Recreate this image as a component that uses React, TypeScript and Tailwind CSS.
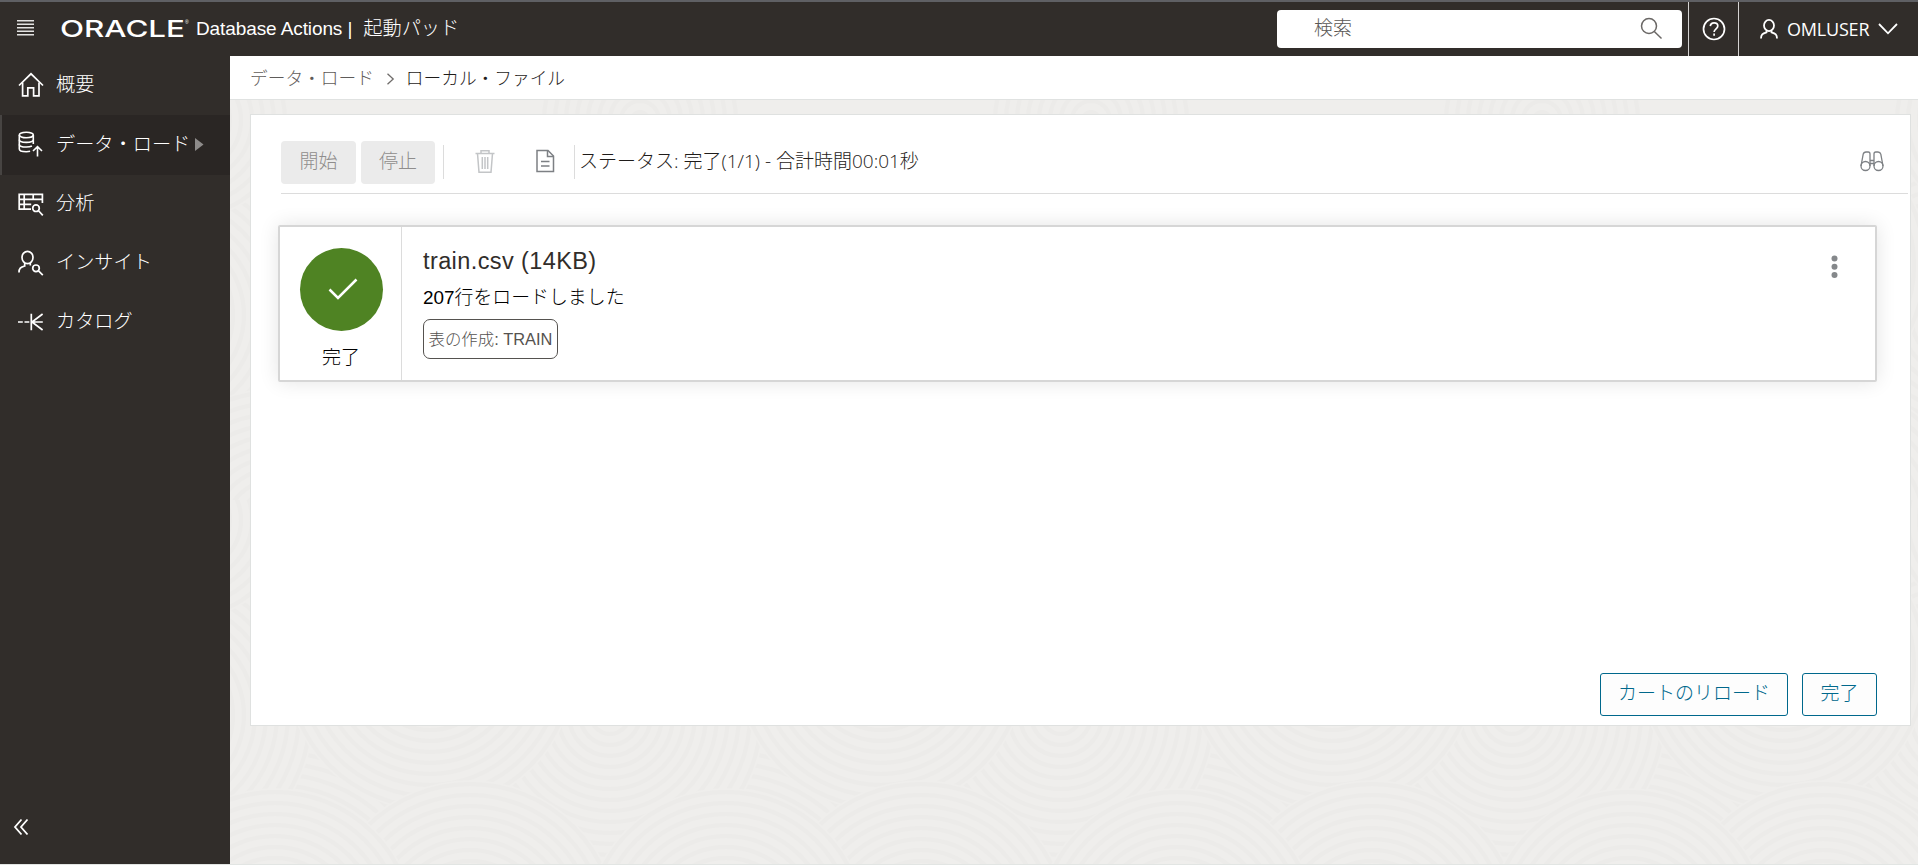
import type { ReactNode } from "react";

type NavItem = {
  label: string;
  icon: ReactNode;
  active?: boolean;
};

function HomeIcon() {
  return (
    <svg width="26" height="26" viewBox="0 0 26 26" fill="none" stroke="#fff" strokeWidth="1.7">
      <path d="M1 13.5 13 1.8l12 11.7" />
      <path d="M4.6 10.5v13.3h5.2v-8h5.8v8H21V10.5" />
    </svg>
  );
}

function DataLoadIcon() {
  return (
    <svg width="26" height="26" viewBox="0 0 26 26" fill="none" stroke="#fff" strokeWidth="1.6">
      <ellipse cx="8.3" cy="4" rx="7" ry="2.7" />
      <path d="M1.3 4v14c0 1.6 3 2.7 7 2.7 1.4 0 2.7-.1 3.8-.4M15.3 4v9" />
      <path d="M1.3 8.8c0 1.5 3 2.6 7 2.6s7-1.1 7-2.6M1.3 13.4c0 1.5 3 2.6 7 2.6 2.3 0 4.4-.4 5.6-1" />
      <path d="M19.5 25.5v-9M15 20l4.5-4.3L24 20" />
    </svg>
  );
}

function AnalysisIcon() {
  return (
    <svg width="26" height="26" viewBox="0 0 26 26" fill="none" stroke="#fff" strokeWidth="1.7">
      <path d="M13 18.2H1.2V3.3h23.2V12M1.2 8.3h23.2M1.2 13.3h12M6.2 3.3v15M15.2 3.3v5" />
      <circle cx="18" cy="17.2" r="3.3" />
      <path d="m20.3 19.5 4.5 4.8" />
    </svg>
  );
}

function InsightIcon() {
  return (
    <svg width="26" height="26" viewBox="0 0 26 26" fill="none" stroke="#fff" strokeWidth="1.7">
      <ellipse cx="9.5" cy="7.5" rx="5.5" ry="6.2" />
      <path d="M1 22.5c0-4 1.5-5.3 5.7-6.5v-3M12.3 13v2.5" />
      <circle cx="18" cy="18.3" r="3.3" />
      <path d="m20.3 20.6 4.5 4.6" />
    </svg>
  );
}

function CatalogIcon() {
  return (
    <svg width="26" height="26" viewBox="0 0 26 26" fill="none" stroke="#fff" strokeWidth="1.7">
      <path d="M0 13h4.800M6.500 13h4.800M13.300 4.800v16.400M13 13h11.800M24.600 5 14 13l10.600 8" />
    </svg>
  );
}

const navItems: NavItem[] = [
  { label: "概要", icon: <HomeIcon /> },
  { label: "データ・ロード", icon: <DataLoadIcon />, active: true },
  { label: "分析", icon: <AnalysisIcon /> },
  { label: "インサイト", icon: <InsightIcon /> },
  { label: "カタログ", icon: <CatalogIcon /> },
];

const TILE = 451;

// Listed back to front, each disc hides the ones before it.
const discs = [
  { cx: 116, cy: 430, r: 215 },
  { cx: 0, cy: 215, r: 155 },
  { cx: 271, cy: 165, r: 146 },
  { cx: 311, cy: 430, r: 150 },
  { cx: 116, cy: 430, r: 142 },
  { cx: 30, cy: 20, r: 100 },
];

function ringsFor(radius: number) {
  const rings: number[] = [];
  for (let r = radius - 4; r > 0; r -= 11) {
    rings.push(r);
  }
  return rings;
}

function Texture() {
  return (
    <svg className="absolute inset-0 h-full w-full" aria-hidden="true">
      <defs>
        <pattern id="waves" x="-71" y="444" width={TILE} height="400" patternUnits="userSpaceOnUse">
          {discs.map((disc, i) =>
            [-TILE, 0, TILE].map((shift) => (
              <g key={`${i}-${shift}`} fill="none" stroke="#ecebe9" strokeWidth="4">
                <circle cx={disc.cx + shift} cy={disc.cy} r={disc.r} fill="#efeeec" stroke="none" />
                {ringsFor(disc.r).map((r) => (
                  <circle key={r} cx={disc.cx + shift} cy={disc.cy} r={r} />
                ))}
              </g>
            ))
          )}
        </pattern>
      </defs>
      <rect width="100%" height="100%" fill="url(#waves)" />
    </svg>
  );
}

function Header() {
  return (
    <header className="flex h-14 shrink-0 items-stretch border-t-2 border-[#5f6064] bg-[#312d2a] text-white">
      <div className="flex flex-1 items-center pb-[2px]">
        <svg className="ml-[17px]" width="17" height="16" viewBox="0 0 17 16" fill="#e4e3e2">
          <rect y="0" width="17" height="1.5" />
          <rect y="3.5" width="17" height="1.5" />
          <rect y="7" width="17" height="1.5" />
          <rect y="10.5" width="17" height="1.5" />
          <rect y="14" width="17" height="1.5" />
        </svg>
        <svg className="ml-[25px] overflow-visible" width="131" height="36" viewBox="0 0 131 36" fill="#fff">
          <text
            x="1"
            y="26.5"
            textLength="125"
            lengthAdjust="spacingAndGlyphs"
            className="font-['Inter',sans-serif] text-[23px] font-medium"
          >
            ORACLE
          </text>
          <text x="126" y="14" className="font-['Liberation_Sans',sans-serif] text-[5px]">
            ®
          </text>
        </svg>
        <span className="ml-[6px] pt-px text-[19px] leading-none tracking-[-0.1px] whitespace-nowrap">
          Database Actions |
        </span>
        <span className="ml-[11px] pt-[2px] text-[19.2px] leading-none">起動パッド</span>
      </div>
      <div className="mt-2 mr-[6px] flex h-[38px] w-[405px] items-center rounded bg-white pr-[19px] pl-[37px]">
        <span className="flex-1 pb-[2px] text-[19px] leading-none text-[#5a5754]">検索</span>
        <svg className="-mt-[2px]" width="23" height="23" viewBox="0 0 23 23" fill="none" stroke="#6a6765" strokeWidth="1.5">
          <circle cx="9" cy="9" r="7.5" />
          <path d="m14.3 14.5 7.2 7" />
        </svg>
      </div>
      <div className="flex w-[50px] items-center justify-center border-l border-[#d5d3d2]">
        <svg width="24" height="24" viewBox="0 0 24 24" fill="none" stroke="#fff" strokeWidth="1.7">
          <circle cx="12" cy="12" r="10.5" />
          <path d="M8.3 9.200c.2-2 1.700-3.300 3.800-3.300s3.700 1.300 3.700 3.200c0 2.700-3.700 2.900-3.700 6" />
          <path d="M12.1 16.5v2.2" />
        </svg>
      </div>
      <div className="flex w-[180px] items-center border-l border-[#d5d3d2] pl-[21px]">
        <svg width="18" height="20" viewBox="0 0 18 20" fill="none" stroke="#fff" strokeWidth="1.8">
          <ellipse cx="9" cy="6.5" rx="5" ry="5.6" />
          <path d="M1 19.5c0-4 1.5-5 5.5-6.2v-1.5M17 19.5c0-4-1.5-5-5.5-6.2v-1.5" />
        </svg>
        <span className="ml-[9px] w-[83px] font-['Open_Sans',sans-serif] text-[18px] leading-none font-normal tracking-[-0.2px]">
          OMLUSER
        </span>
        <svg className="ml-[8px]" width="20" height="12" viewBox="0 0 20 12" fill="none" stroke="#fff" strokeWidth="1.8">
          <path d="m1 1 9 9.3L19 1" />
        </svg>
      </div>
    </header>
  );
}

function Sidebar() {
  return (
    <aside className="flex w-[230px] shrink-0 flex-col bg-[#312d2a] text-white">
      <nav>
        {navItems.map((item) => (
          <a
            key={item.label}
            className={
              item.active
                ? "flex h-[60px] items-center border-l-2 border-[#474442] bg-[#2a2624] pl-[16px]"
                : "flex h-[59px] items-center pl-[18px]"
            }
          >
            <span className="-mt-[2px]">{item.icon}</span>
            <span className="-mt-px ml-[12px] text-[19.2px] leading-none">{item.label}</span>
            {item.active && (
              <svg className="-mt-[2px] ml-[5px]" width="9" height="13" viewBox="0 0 9 13" fill="#8d8b8a">
                <path d="M0 0v13l8.5-6.5z" />
              </svg>
            )}
          </a>
        ))}
      </nav>
      <svg className="mt-auto mb-[28px] ml-[13px]" width="16" height="18" viewBox="0 0 16 18" fill="none" stroke="#fff" strokeWidth="1.8">
        <path d="M8.5 1.5 2 9l6.5 7.5M14.5 1.5 8 9l6.5 7.5" />
      </svg>
    </aside>
  );
}

function Toolbar() {
  return (
    <div className="mr-[2px] ml-[30px] flex h-[79px] items-start border-b border-[#dcdcdc] pt-[26px] text-[19px]">
      <button className="h-[43px] w-[75px] rounded bg-[#ebebeb] pb-[3px] leading-none text-[#8f8d8c]">開始</button>
      <button className="ml-[5px] h-[43px] w-[74px] rounded bg-[#ebebeb] pb-[3px] leading-none text-[#8f8d8c]">停止</button>
      <div className="mt-1 ml-[8px] h-[34px] w-px bg-[#dcdcdc]" />
      <svg className="mt-[8px] ml-[31px]" width="20" height="25" viewBox="0 0 20 25" fill="none" stroke="#c3c5c7" strokeWidth="1.5">
        <path d="M.5 4.5h19M6 4.5V1.700h8v2.800M2.500 4.500 4 23.300h12l1.500-18.800M7.300 8v12M10 8v12M12.700 8v12" />
      </svg>
      <svg className="mt-[8px] ml-[41px]" width="19" height="25" viewBox="0 0 19 25" fill="none" stroke="#7d8084" strokeWidth="1.5">
        <path d="M1 1.5h11l5.5 5.5v15.5H1z" />
        <path d="M11.5 1.5v6h6M5 12.5h8.5M5 17h8.500" />
      </svg>
      <div className="mt-1 ml-[19px] h-[34px] w-px bg-[#dcdcdc]" />
      <span className="mt-[11px] ml-[4px] flex-1 font-['Open_Sans','Noto_Sans_CJK_JP',sans-serif] text-[19px] leading-none text-[#1f1c1a]">
        ステータス: 完了(1/1) - 合計時間00:01秒
      </span>
      <svg className="mt-[10px] mr-[24px]" width="24" height="21" viewBox="0 0 24 21" fill="none" stroke="#7d8084" strokeWidth="1.3">
        <path d="M1 15 3.2 3.2C3.6 1.6 4.5 1 6 1h2.2C9.5 1 10 1.7 10 3v12M23 15 20.8 3.2C20.4 1.6 19.5 1 18 1h-2.2C14.5 1 14 1.7 14 3v12M10 9.5h4M10 12.5h4" />
        <circle cx="5.5" cy="15" r="4.5" />
        <circle cx="18.5" cy="15" r="4.5" />
      </svg>
    </div>
  );
}

function FileCard() {
  return (
    <div className="mt-[31px] mr-[33px] ml-[27px] flex h-[157px] rounded-[2px] border-2 border-[#d6d6d6] bg-white shadow-[0_0_20px_rgba(0,0,0,0.11)]">
      <div className="flex w-[122px] shrink-0 flex-col items-center border-r border-[#dcdcdc] pt-[21px] pl-px">
        <div className="flex size-[83px] items-center justify-center rounded-full bg-[#4f8323]">
          <svg className="-mt-[2px] ml-[3px]" width="30" height="22" viewBox="0 0 30 22" fill="none" stroke="#fff" strokeWidth="2.5">
            <path d="m1.5 11.5 8.5 8.5L28.5 1.5" />
          </svg>
        </div>
        <span className="mt-[17px] text-[19px] leading-none text-black">完了</span>
      </div>
      <div className="flex flex-1 flex-col items-start pl-[21px]">
        <h3 className="mt-[21px] text-[23.5px] leading-[26px] tracking-[0.4px] text-[#312d2a]">train.csv (14KB)</h3>
        <p className="mt-[12px] text-[18.9px] leading-[24px] text-black">207行をロードしました</p>
        <span className="mt-[9px] flex h-[40px] w-[135px] items-center justify-center rounded-[7px] border border-[#55524f] text-[16.4px] leading-none whitespace-nowrap text-[#55524f]">
          表の作成: TRAIN
        </span>
      </div>
      <svg className="mt-[28px] mr-[37px]" width="7" height="24" viewBox="0 0 7 24" fill="#85888b">
        <circle cx="3.5" cy="3.5" r="3" />
        <circle cx="3.5" cy="11.8" r="3" />
        <circle cx="3.5" cy="20.1" r="3" />
      </svg>
    </div>
  );
}

export default function App() {
  return (
    <div className="flex h-[865px] w-full flex-col overflow-hidden border-b border-[#e2e5e3] font-['Liberation_Sans','Noto_Sans_CJK_JP',sans-serif] font-light">
      <Header />
      <div className="flex min-h-0 flex-1">
        <Sidebar />
        <main className="relative flex flex-1 flex-col bg-[#efeeec]">
          <Texture />
          <div className="relative flex h-[44px] items-center border-b border-[#e0e2e1] bg-white pt-[5px] pl-[20px] text-[17.7px] leading-none">
            <span className="text-[#5f5c5a]">データ・ロード</span>
            <svg className="-mt-[3px] ml-[12px]" width="9" height="12" viewBox="0 0 9 12" fill="none" stroke="#6f6c6a" strokeWidth="1.3">
              <path d="m1.5.7 5.7 5.3-5.7 5.3" />
            </svg>
            <span className="ml-[11px] text-[#1f1c1a]">ローカル・ファイル</span>
          </div>
          <section className="relative mt-[14px] mr-[7px] ml-[20px] flex h-[612px] flex-col border border-[#dfe1e0] bg-white">
            <Toolbar />
            <FileCard />
            <div className="mt-auto mr-[33px] mb-[9px] flex justify-end gap-[14px] text-[19px] leading-none text-[#00688c]">
              <button className="h-[43px] w-[188px] rounded-[3px] border border-[#00688c] bg-[#fdfdfd] pb-[3px]">
                カートのリロード
              </button>
              <button className="h-[43px] w-[75px] rounded-[3px] border border-[#00688c] bg-[#fdfdfd] pb-[3px]">
                完了
              </button>
            </div>
          </section>
        </main>
      </div>
    </div>
  );
}
